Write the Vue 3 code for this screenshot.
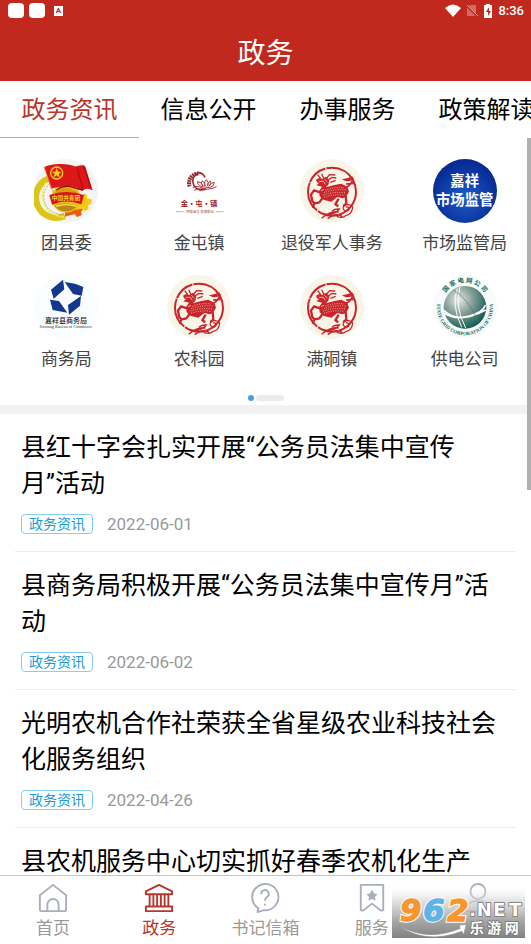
<script setup>
import { ref } from "vue";

const tabs = ["政务资讯", "信息公开", "办事服务", "政策解读"];
const activeTab = ref(0);

const departments = [
  { name: "团县委", logo: "league" },
  { name: "金屯镇", logo: "jintun" },
  { name: "退役军人事务", logo: "qilin" },
  { name: "市场监管局", logo: "market" },
  { name: "商务局", logo: "commerce" },
  { name: "农科园", logo: "qilin" },
  { name: "满硐镇", logo: "qilin" },
  { name: "供电公司", logo: "grid" },
];

const news = [
  { title: "县红十字会扎实开展“公务员法集中宣传月”活动", date: "2022-06-01" },
  { title: "县商务局积极开展“公务员法集中宣传月”活动", date: "2022-06-02" },
  { title: "光明农机合作社荣获全省星级农业科技社会化服务组织", date: "2022-04-26" },
  { title: "县农机服务中心切实抓好春季农机化生产", date: "" },
];

const navs = [
  { key: "home", label: "首页" },
  { key: "gov", label: "政务" },
  { key: "mail", label: "书记信箱" },
  { key: "service", label: "服务" },
  { key: "mine", label: "" },
];
const activeNav = ref("gov");
</script>

<template>
  <div class="page">
    <header class="header">
      <div class="status">
        <span class="status-app"></span>
        <span class="status-app"></span>
        <span class="status-a">A</span>
        <span class="status-space"></span>
        <svg class="status-icon" width="16" height="14" viewBox="0 0 16 14">
          <path d="M0 4Q8-3 16 4L8 13Z" fill="#fff" />
        </svg>
        <svg class="status-icon" width="12" height="14" viewBox="0 0 12 14">
          <path d="M4 1H10V12H1V4Z" fill="#d66a62" />
          <path d="M0 1L12 13" stroke="#c1291e" stroke-width="2" />
          <path d="M1 1L12 12" stroke="#e09a94" />
        </svg>
        <svg class="status-icon" width="10" height="14" viewBox="0 0 10 14">
          <path d="M3 0H7V1H9V14H1V1H3Z" fill="#fff" />
          <path d="M6 3L3 8H5V12L8 7H6Z" fill="#c1291e" />
        </svg>
        <span class="status-time">8:36</span>
      </div>
      <h1 class="title">政务</h1>
    </header>

    <div class="tabs">
      <button
        v-for="(tab, i) in tabs"
        :key="tab"
        type="button"
        :class="['tab', { 'tab-active': i === activeTab }]"
        @click="activeTab = i"
      >
        {{ tab }}
      </button>
    </div>

    <main class="content">
      <span class="scrollbar"></span>

      <section class="departments">
        <a v-for="item in departments" :key="item.name" href="#" class="department">
          <!-- youth league -->
          <svg v-if="item.logo === 'league'" class="logo" viewBox="0 9 192 192">
            <circle cx="96" cy="105" r="96" fill="#f4f4f4" />
            <path
              d="M42 68A60 60 0 0 0 92 180"
              fill="none"
              stroke="#dcc41a"
              stroke-width="19"
            />
            <path
              d="M36 80A66 66 0 0 0 92 183"
              fill="none"
              stroke="#f6ea66"
              stroke-width="5"
              stroke-dasharray="6 3"
            />
            <path
              d="M48 82A52 52 0 0 0 92 173"
              fill="none"
              stroke="#a98d10"
              stroke-width="2"
              stroke-dasharray="6 4"
            />
            <path
              d="M150 112L160 117L158 127L174 130L172 143L162 148L164 158L154 166L148 160L141 168L143 177L129 183L122 174L92 180L94 165L132 150Z"
              fill="#f9c910"
            />
            <path d="M94 166L146 158L141 168L143 177L129 183L122 174L92 182Z" fill="#ee5a16" />
            <circle cx="96" cy="126" r="44" fill="#efbe18" />
            <path d="M62 110Q96 78 132 112L126 121H66Z" fill="#d99e0c" />
            <path d="M62 150Q95 134 130 150Q116 166 95 166T62 150Z" fill="#b88913" />
            <path d="M66 151Q96 141 128 151" fill="none" stroke="#f8e160" stroke-width="4" />
            <path d="M46 117Q96 99 150 117L142 145Q96 128 54 146Z" fill="#d61616" />
            <text x="96" y="132" class="league-text">中国共青团</text>
            <path
              d="M31 33Q48 25 75 24Q105 23 126 32Q147 24 154 32L176 103Q157 93 145 105Q128 89 96 91Q71 92 51 98Z"
              fill="#dc1717"
            />
            <path d="M128 31L147 101M149 29L171 98" stroke="#9e0a12" stroke-width="3" />
            <path d="M67 103Q79 90 106 91L145 102" fill="none" stroke="#8d1010" stroke-width="4" />
            <path d="M29 31L59 113" stroke="#e6a03c" stroke-width="2" />
            <circle cx="68" cy="51" r="18" fill="none" stroke="#f8d01c" stroke-width="4" />
            <path d="M68 36L72 47L83 47L74 54L78 65L68 58L58 65L62 54L53 47L64 47Z" fill="#f8d01c" />
          </svg>

          <!-- jintun town -->
          <svg v-else-if="item.logo === 'jintun'" class="logo" viewBox="501 57 192 192">
            <path
              d="M591 101A26 26 0 1 0 618 146"
              fill="none"
              stroke="#a3262b"
              stroke-width="5"
            />
            <path
              d="M569 139A28 28 0 0 1 598 101"
              fill="none"
              stroke="#8c2226"
              stroke-width="12"
              stroke-dasharray="5 2"
            />
            <path
              d="M594 98Q608 98 615 112"
              fill="none"
              stroke="#a3262b"
              stroke-width="5"
            />
            <g fill="none" stroke="#a9383c" stroke-width="3">
              <path d="M606 140Q590 133 593 125Q603 124 609 138Q600 128 607 122Q614 127 615 138Q611 124 619 119Q628 126 623 138Q622 127 631 123Q636 129 627 139Q633 127 643 127Q644 138 629 143Z" />
              <path d="M578 142Q594 135 607 144T650 140M583 151Q606 143 613 148" />
            </g>
            <text x="597" y="197" class="jintun-name">金·屯·镇</text>
            <path d="M528 215H551M648 215H671" stroke="#bd8583" stroke-width="2" />
            <text x="600" y="218" class="jintun-sub">明德金屯 和谐家园</text>
          </svg>

          <!-- paper-cut qilin -->
          <svg v-else-if="item.logo === 'qilin'" class="logo" viewBox="0 9 192 192">
            <circle cx="96" cy="105" r="96" fill="#faf5e9" />
            <g fill="none" stroke="#c9262b">
              <circle cx="96" cy="107" r="72" stroke-width="6" stroke-dasharray="92 2 63 3" />
              <path
                d="M66 73L53 56M72 68L65 53M80 66L89 56L106 57M84 72L96 64L109 66M91 79L107 73"
                stroke-width="4"
              />
              <path d="M137 95Q154 87 159 70Q144 76 134 71Q148 69 158 63M138 84L161 82" stroke-width="5" />
              <path
                d="M60 109L42 103L33 116L37 136L45 142M70 123L58 139L42 143L39 156M116 128L106 145L115 151M137 120L139 143L130 150"
                stroke-width="7"
                stroke-linejoin="round"
              />
              <path
                d="M65 187Q91 163 116 168M71 174Q99 181 118 159Q105 158 96 165M83 188Q105 173 113 177Q129 179 124 184M157 159Q161 149 145 146Q127 145 130 159Q136 170 146 162Q148 151 138 153M110 181Q129 188 137 179Q154 175 157 159"
                stroke-width="4"
              />
            </g>
            <path
              d="M48 71L57 66L65 70L78 62L88 73L85 86L78 94L103 87L124 83L142 92L147 107L138 123L127 127L112 123L94 137L72 132L59 121L57 105L66 92L49 88L57 82L51 79Z"
              fill="#c9262b"
            />
            <g fill="none" stroke="#faf5e9" stroke-width="2">
              <path d="M57 76H70L76 85M73 70L82 78M63 104L72 100" />
              <path
                d="M76 103Q101 92 132 96M72 110Q99 99 140 102M70 117Q100 106 138 111M72 124Q101 113 132 118"
                stroke-dasharray="3 4"
              />
            </g>
          </svg>

          <!-- market supervision -->
          <svg v-else-if="item.logo === 'market'" class="logo" viewBox="503 56 192 192">
            <defs>
              <radialGradient id="marketBlue" cx="50%" cy="60%" r="55%">
                <stop offset="0" stop-color="#1b5dc8" />
                <stop offset="1" stop-color="#082a93" />
              </radialGradient>
            </defs>
            <circle cx="599" cy="152" r="96" fill="url(#marketBlue)" />
            <text x="598" y="136" class="market-text">嘉祥</text>
            <text x="598" y="193" class="market-text">市场监管</text>
          </svg>

          <!-- commerce bureau -->
          <svg v-else-if="item.logo === 'commerce'" class="logo" viewBox="103 30 192 192">
            <circle cx="199" cy="126" r="96" fill="#fafdff" />
            <g fill="#12378c">
              <path d="M154 74L190 44L194 73L162 101Z" />
              <path d="M195 51L226 56L251 66L246 92L220 87Z" />
              <path d="M244 93L241 122L208 149L205 120Z" />
              <path d="M151 104L178 108L203 143L159 135Z" />
            </g>
            <text x="199" y="173" class="commerce-name">嘉祥县商务局</text>
            <text x="199" y="188" class="commerce-sub">Jiaxiang Bureau of Commerce</text>
          </svg>

          <!-- state grid -->
          <svg v-else class="logo" viewBox="504 30 192 192">
            <defs>
              <radialGradient id="gridGlobe" cx="35%" cy="32%" r="75%">
                <stop offset="0" stop-color="#e5ece9" />
                <stop offset="0.45" stop-color="#849e96" />
                <stop offset="1" stop-color="#07594d" />
              </radialGradient>
              <path id="gridTop" d="M531 121A69 69 0 0 1 669 121" />
              <path id="gridBottom" d="M524 91A84 84 0 1 0 676 91" />
            </defs>
            <circle cx="600" cy="126" r="96" fill="#f8fbfb" />
            <circle cx="600" cy="127" r="64" fill="url(#gridGlobe)" />
            <g fill="none" stroke="#fff" stroke-width="5">
              <path d="M537 136Q566 165 610 154T661 121M537 144Q584 176 662 135" />
              <path d="M577 70Q558 120 590 187M585 66Q567 122 602 189" stroke-width="3" />
              <path d="M566 75Q607 98 641 172" stroke="#58766e" stroke-width="2" />
            </g>
            <text class="grid-cn">
              <textPath href="#gridTop" startOffset="50%">国 家 电 网 公 司</textPath>
            </text>
            <text class="grid-en">
              <textPath href="#gridBottom" startOffset="50%">STATE GRID CORPORATION OF CHINA</textPath>
            </text>
          </svg>
          <span class="department-name">{{ item.name }}</span>
        </a>
      </section>

      <div class="pager">
        <span class="pager-dot"></span>
        <span class="pager-bar"></span>
      </div>

      <section class="news">
        <a v-for="item in news" :key="item.title" href="#" class="news-item">
          <h2 class="news-title">{{ item.title }}</h2>
          <div v-if="item.date" class="news-meta">
            <span class="news-tag">政务资讯</span>
            <time class="news-date">{{ item.date }}</time>
          </div>
        </a>
      </section>
    </main>

    <nav class="nav">
      <button
        v-for="item in navs"
        :key="item.key"
        type="button"
        :class="['nav-item', { 'nav-active': item.key === activeNav }]"
        @click="activeNav = item.key"
      >
        <svg class="nav-icon" viewBox="0 0 32 32">
          <g v-if="item.key === 'home'">
            <path d="M2 13L16 2L30 13V28Q30 30 28 30H4Q2 30 2 28Z" />
            <path d="M10 30V23A6 6 0 0 1 22 23V30" />
          </g>
          <g v-else-if="item.key === 'gov'">
            <path d="M2 9L16 2L30 9V12H2Z" />
            <path d="M6 12V25M10 12V25M14 12V25M18 12V25M22 12V25M26 12V25M2 25H30V30H2Z" />
          </g>
          <g v-else-if="item.key === 'mail'">
            <path d="M9 27A14 14 0 1 1 15 29L8 31Z" />
            <path d="M12 12A4 4 0 1 1 18 15Q16 16 16 19M16 22V24" />
          </g>
          <g v-else-if="item.key === 'service'">
            <path d="M4 2H28V29Q27 30 25 29L16 22L7 29Q5 30 4 29Z" />
            <path class="nav-star" d="M16 7L18 11L22 12L19 15L20 19L16 17L12 19L13 15L10 12L14 11Z" />
          </g>
          <g v-else>
            <circle cx="16" cy="9" r="8" />
            <path d="M2 30Q4 19 16 19T30 30Z" />
          </g>
        </svg>
        <span v-if="item.label">{{ item.label }}</span>
      </button>

      <svg class="watermark" viewBox="6 30 399 159">
        <defs>
          <linearGradient id="markShade" x1="0" y1="0" x2="0" y2="1">
            <stop offset="0" stop-color="#fff" stop-opacity="0" />
            <stop offset="0.3" stop-color="#d4d4d4" stop-opacity="0.7" />
            <stop offset="0.65" stop-color="#aaa" />
            <stop offset="1" stop-color="#828282" />
          </linearGradient>
        </defs>
        <rect x="6" y="30" width="399" height="159" fill="url(#markShade)" />
        <path
          d="M26 151Q112 202 211 160L207 151L229 148L221 179L216 169Q104 210 26 151Z"
          fill="#fff"
          stroke="#909090"
          stroke-width="2"
        />
        <text y="138" class="mark-number mark-edge">
          <tspan x="30">9</tspan>
          <tspan x="100">6</tspan>
          <tspan x="172">2</tspan>
        </text>
        <text y="138" class="mark-number">
          <tspan x="30" class="mark-orange">9</tspan>
          <tspan x="100" class="mark-blue">6</tspan>
          <tspan x="172" class="mark-orange">2</tspan>
        </text>
        <text y="124" class="mark-net">
          <tspan x="238">.</tspan><tspan x="260">N</tspan><tspan x="310">E</tspan><tspan x="357">T</tspan>
        </text>
        <text y="175" class="mark-name">
          <tspan x="239">乐</tspan><tspan x="292">游</tspan><tspan x="344">网</tspan>
        </text>
      </svg>
    </nav>
  </div>
</template>

<style>
body {
  background: #fff;
}
</style>

<style scoped>
.page {
  display: flex;
  flex-direction: column;
  height: 100vh;
  overflow: hidden;
  background: #fff;
  color: #000;
  font-family: Roboto, "Noto Sans CJK SC", sans-serif;
}

button {
  border: 0;
  padding: 0;
  background: none;
  font-family: inherit;
}

a {
  color: inherit;
  text-decoration: none;
}

/* HEADER */
.header {
  flex: none;
  background: #c1291e;
  color: #fff;
}

.status {
  display: flex;
  align-items: center;
  height: 21px;
  padding: 0 7px 0 8px;
}

.status-app {
  width: 16px;
  height: 15px;
  margin-right: 5px;
  border-radius: 4px;
  background: #fff;
}

.status-a {
  width: 9px;
  height: 10px;
  margin-left: 4px;
  background: #fff;
  color: #c1291e;
  font-size: 8px;
  font-weight: 700;
  line-height: 10px;
  text-align: center;
}

.status-space {
  flex: 1;
}

.status-icon {
  margin-right: 5px;
}

.status-time {
  font-size: 13px;
  font-weight: 500;
}

.title {
  margin: 0;
  padding-top: 6px;
  font-size: 28px;
  font-weight: 400;
  line-height: 54px;
  text-align: center;
}

/* TABS */
.tabs {
  display: flex;
  flex: none;
  overflow: hidden;
}

.tab {
  flex: none;
  width: 139px;
  height: 57px;
  padding-bottom: 3px;
  border-bottom: 1px solid transparent;
  color: #000;
  font-size: 24px;
  white-space: nowrap;
}

.tab-active {
  border-color: #cf9d99;
  color: #b8362c;
}

/* CONTENT */
.content {
  position: relative;
  flex: 1;
  min-height: 0;
  overflow: hidden;
}

.scrollbar {
  position: absolute;
  top: 0;
  right: 0;
  width: 4px;
  height: 352px;
  background: #b0b0b0;
}

.departments {
  display: grid;
  grid-template-columns: repeat(4, 1fr);
  row-gap: 20px;
  padding-top: 21px;
}

.department {
  display: flex;
  flex-direction: column;
  align-items: center;
  gap: 8px;
}

.logo {
  width: 64px;
  height: 64px;
}

.department-name {
  color: #444;
  font-size: 17px;
  line-height: 24px;
}

/* LOGO TEXT */
.logo text {
  text-anchor: middle;
}

.league-text {
  fill: #f7cf2a;
  font-size: 17px;
  font-weight: 700;
}

.jintun-name {
  fill: #9c2023;
  font-family: "Noto Sans CJK SC", sans-serif;
  font-size: 22px;
  font-weight: 700;
}

.jintun-sub {
  fill: #a85552;
  font-size: 10px;
}

.market-text {
  fill: #fff;
  font-size: 43px;
  font-weight: 700;
}

.commerce-name {
  fill: #222;
  font-size: 21px;
  font-weight: 500;
}

.commerce-sub {
  fill: #333;
  font-family: "Liberation Serif", serif;
  font-size: 13px;
}

.grid-cn {
  fill: #1c6b5d;
  font-size: 19px;
  font-weight: 700;
}

.grid-en {
  fill: #1c6b5d;
  font-family: "Liberation Serif", serif;
  font-size: 15px;
  font-weight: 700;
}

/* PAGER */
.pager {
  display: flex;
  align-items: center;
  justify-content: center;
  gap: 2px;
  padding: 24px 0 4px;
}

.pager-dot {
  width: 6px;
  height: 6px;
  border-radius: 50%;
  background: #4a9ae8;
}

.pager-bar {
  width: 28px;
  height: 6px;
  border-radius: 3px;
  background: #ebebeb;
}

/* NEWS */
.news {
  padding: 0 15px;
  border-top: 9px solid #f2f2f2;
}

.news-item {
  display: block;
  padding: 16px 16px 17px 6px;
  border-bottom: 1px solid #ececec;
}

.news-title {
  margin: 0 0 12px;
  font-size: 25px;
  font-weight: 400;
  line-height: 36px;
}

.news-meta {
  display: flex;
  align-items: center;
  gap: 14px;
  height: 20px;
}

.news-tag {
  box-sizing: border-box;
  height: 20px;
  padding: 0 7px;
  border: 1px solid #86cdf2;
  border-radius: 4px;
  color: #1d9ad6;
  font-size: 14px;
  line-height: 18px;
}

.news-date {
  color: #999;
  font-size: 17px;
}

/* BOTTOM NAV */
.nav {
  position: relative;
  display: grid;
  flex: none;
  grid-template-columns: repeat(5, 1fr);
  height: 68px;
  border-top: 1px solid #c4c4c4;
}

.nav-item {
  display: flex;
  flex-direction: column;
  align-items: center;
  gap: 3px;
  padding-top: 7px;
  color: #999;
  font-size: 17px;
  line-height: 24px;
}

.nav-active {
  color: #b8362c;
}

.nav-icon {
  width: 30px;
  height: 30px;
  fill: none;
  stroke: #a9aebd;
  stroke-width: 2;
  stroke-linejoin: round;
}

.nav-active .nav-icon {
  stroke: #b8362c;
}

.nav-star {
  fill: #a9aebd;
  stroke: none;
}

/* WATERMARK */
.watermark {
  position: absolute;
  right: 6px;
  bottom: 6px;
  width: 133px;
  height: 53px;
}

.mark-number {
  font-family: "DejaVu Sans", sans-serif;
  font-size: 92px;
  font-style: italic;
  font-weight: 700;
  stroke-width: 4;
}

.mark-edge {
  fill: #fff;
  stroke: #fff;
  stroke-width: 10;
}

.mark-orange {
  fill: #f7962d;
  stroke: #f7962d;
}

.mark-blue {
  fill: #60b3e6;
  stroke: #60b3e6;
}

.mark-net,
.mark-name {
  fill: #fff;
  font-weight: 700;
  stroke: #777;
  stroke-width: 5;
  paint-order: stroke;
}

.mark-net {
  font-family: "DejaVu Sans", sans-serif;
  font-size: 54px;
}

.mark-name {
  font-size: 42px;
}
</style>
